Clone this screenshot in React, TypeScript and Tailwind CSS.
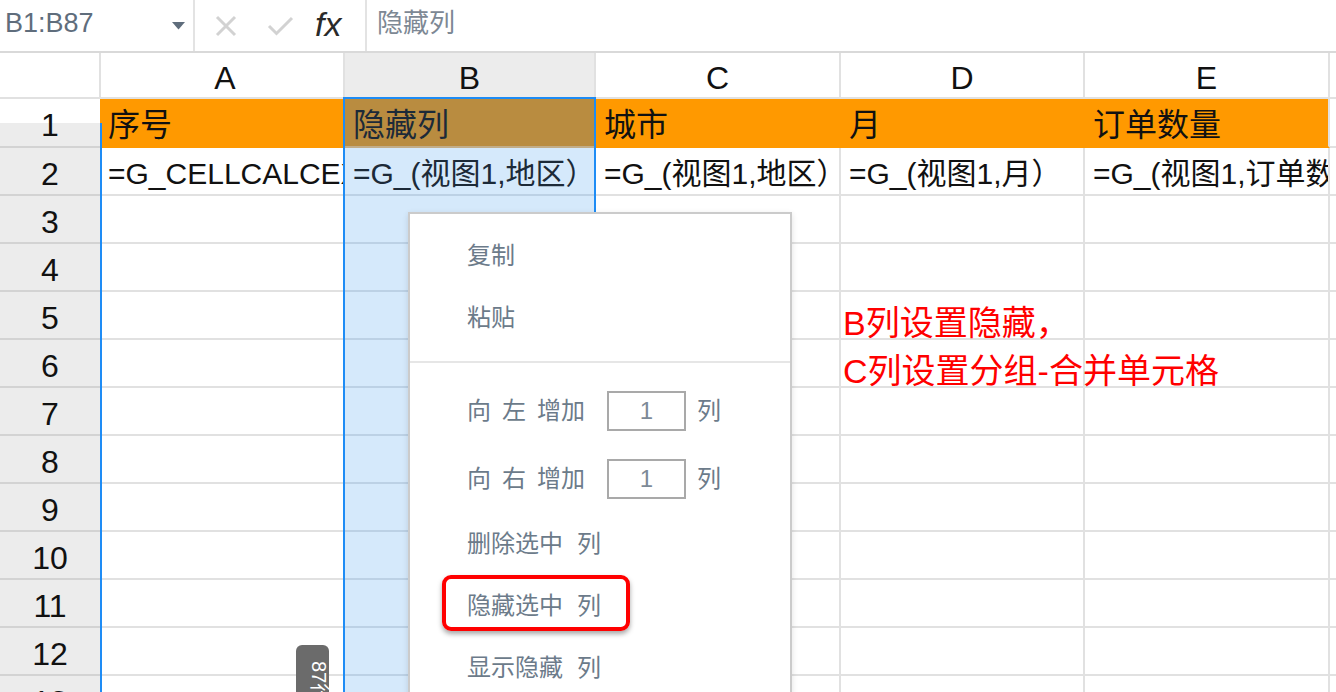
const colW = ['w-[245px]', 'w-[251px]', 'w-[245px]', 'w-[244px]', 'w-[245px]', 'flex-1'];

const row1Cls = [
  'bg-[#ff9900] border-[#ff9900] text-[#111]',
  'bg-[#b98c40] border-r-[#b98c40] border-b-[#c2ad88] text-[#1c2a38]',
  'bg-[#ff9900] border-[#ff9900] text-[#111]',
  'bg-[#ff9900] border-[#ff9900] text-[#111]',
  'bg-[#ff9900] border-b-[#ff9900] border-r-[#e1e1e1] text-[#111]',
  'bg-white border-[#e1e1e1]',
];

const plainCls = [
  'bg-white border-[#e1e1e1] text-[#111]',
  'bg-[#d5e9fb] border-r-[#d5e9fb] border-b-[#bcd1e5] text-[#1c2a38]',
  'bg-white border-[#e1e1e1] text-[#111]',
  'bg-white border-[#e1e1e1] text-[#111]',
  'bg-white border-[#e1e1e1] text-[#111]',
  'bg-white border-[#e1e1e1]',
];

const headerRow = ['序号', '隐藏列', '城市', '月', '订单数量', ''];
const formulaRow = [
  '=G_CELLCALCEXPR()',
  '=G_(视图1,地区）',
  '=G_(视图1,地区）',
  '=G_(视图1,月）',
  '=G_(视图1,订单数量）',
  '',
];

const TopBar = () => (
  <div className="flex h-[53px] border-b-2 border-[#d9d9d9] bg-white">
    <div className="flex w-[195px] items-center justify-between border-r-2 border-[#e3e3e3] pl-[5px] pr-[8px]">
      <span className="pb-[4px] text-[27px] leading-none text-[#5f6d7c]">B1:B87</span>
      <svg width="13" height="8" viewBox="0 0 13 8">
        <polygon points="0,0 13,0 6.5,7.5" fill="#5f6d7c" />
      </svg>
    </div>
    <div className="flex w-[172px] items-center border-r-2 border-[#e3e3e3]">
      <svg className="ml-[20px]" width="22" height="22" viewBox="0 0 22 22">
        <path d="M2 2 L20 20 M20 2 L2 20" stroke="#d2d2d2" strokeWidth="3" />
      </svg>
      <svg className="ml-[30px]" width="27" height="20" viewBox="0 0 27 20">
        <path d="M2 10 L9.5 17.5 L25 2" stroke="#d2d2d2" strokeWidth="3" fill="none" />
      </svg>
      <span className="ml-[21px] pb-[4px] text-[34px] italic leading-none text-[#2a2a2a]">fx</span>
    </div>
    <div className="flex flex-1 items-center pl-[10px]">
      <span className="pb-[6px] text-[26px] leading-none text-[#7d8894]">隐藏列</span>
    </div>
  </div>
);

const ColumnHeader = () => (
  <div className="flex h-[46px] border-b-2 border-[#e1e1e1] text-[32px] leading-none text-[#111]">
    <div className="w-[101px] border-r-2 border-[#e1e1e1] bg-white" />
    <div className="flex w-[244px] items-center justify-center border-r-2 border-[#e1e1e1] pt-[6px] pl-[6px]">A</div>
    <div className="flex w-[251px] items-center justify-center border-r-2 border-[#e1e1e1] bg-[#ececec] pt-[6px]">B</div>
    <div className="flex w-[245px] items-center justify-center border-r-2 border-[#e1e1e1] pt-[6px]">C</div>
    <div className="flex w-[244px] items-center justify-center border-r-2 border-[#e1e1e1] pt-[6px]">D</div>
    <div className="flex w-[245px] items-center justify-center border-r-2 border-[#e1e1e1] pt-[6px]">E</div>
    <div className="flex-1" />
  </div>
);

const SheetRow = ({ n }: { n: number }) => {
  const isFirst = n === 1;
  const cls = isFirst ? row1Cls : plainCls;
  const texts = isFirst ? headerRow : n === 2 ? formulaRow : ['', '', '', '', '', ''];
  const height = isFirst ? 'h-[49px]' : 'h-[48px]';
  const textSize = isFirst ? 'text-[32px]' : 'text-[30px]';

  return (
    <div className={`flex ${height}`}>
      <div
        className={`flex w-[100px] shrink-0 items-center justify-center border-b-2 border-[#d3d3d3] pt-[5px] text-[32px] leading-none text-[#111] ${
          isFirst ? 'bg-[linear-gradient(to_bottom,#ffffff_24px,#ececec_24px)]' : 'bg-[#ececec]'
        }`}
      >
        {n}
      </div>
      {colW.map((w, i) => {
        const isNote = i === 3 && (n === 5 || n === 6);
        return (
          <div
            key={i}
            className={`flex shrink-0 items-center border-r-2 border-b-2 ${w} ${cls[i]} ${
              isNote ? 'overflow-visible pl-[2px] pt-[16px]' : 'overflow-hidden pl-[8px] pt-[5px]'
            }`}
          >
            {isNote ? (
              <span className="relative z-10 whitespace-nowrap text-[34px] leading-none text-[#ff0000]">
                {n === 5 ? 'B列设置隐藏，' : 'C列设置分组-合并单元格'}
              </span>
            ) : (
              <span className={`whitespace-nowrap leading-none ${textSize}`}>{texts[i]}</span>
            )}
          </div>
        );
      })}
    </div>
  );
};

const ContextMenu = () => (
  <div className="absolute left-[408px] top-[212px] z-20 h-[520px] w-[384px] border-2 border-[#cbcbcb] bg-white text-[24px] leading-none text-[#6c7b8a] shadow-[0_2px_6px_rgba(0,0,0,0.12)]">
    <div className="pt-[11px]">
      <div className="flex h-[62px] items-center pl-[57px]">复制</div>
      <div className="flex h-[62px] items-center pl-[57px]">粘贴</div>
    </div>
    <div className="mt-[12px] h-[2px] bg-[#e6e6e6]" />
    <div className="pt-[14px]">
      {['左', '右'].map((side) => (
        <div key={side} className="flex h-[68px] items-center pl-[57px]">
          <span>向</span>
          <span className="ml-[11px]">{side}</span>
          <span className="ml-[11px]">增加</span>
          <div className="ml-[22px] flex h-[40px] w-[79px] items-center justify-center border-2 border-[#a9a9a9] text-[#7d8a97]">
            1
          </div>
          <span className="ml-[11px]">列</span>
        </div>
      ))}
      <div className="flex h-[62px] items-center pl-[57px]">
        删除选中<span className="ml-[14px]">列</span>
      </div>
      <div className="relative flex h-[62px] items-center pl-[57px]">
        <div className="absolute left-[32px] top-0 h-[56px] w-[188px] rounded-[9px] border-[4px] border-[#ff0000] shadow-[0_3px_5px_rgba(0,0,0,0.35)]" />
        隐藏选中<span className="ml-[14px]">列</span>
      </div>
      <div className="flex h-[62px] items-center pl-[57px]">
        显示隐藏<span className="ml-[14px]">列</span>
      </div>
    </div>
  </div>
);

const App = () => {
  const rows = Array.from({ length: 13 }, (_, i) => i + 1);

  return (
    <div className="relative h-[692px] w-[1336px] overflow-hidden bg-white font-['Liberation_Sans','Noto_Sans_CJK_SC',sans-serif]">
      <TopBar />
      <ColumnHeader />
      <div className="flex flex-col">
        {rows.map((n) => (
          <SheetRow key={n} n={n} />
        ))}
      </div>

      {/* selection outlines */}
      <div className="pointer-events-none absolute left-[100px] top-[123px] h-[600px] w-[2px] bg-[#1e8cf5]" />
      <div className="pointer-events-none absolute left-[343px] top-[97px] h-[640px] w-[253px] border-2 border-[#1e8cf5]" />

      {/* row count tag */}
      <div className="absolute left-[296px] top-[645px] z-10 flex h-[70px] w-[33px] items-start justify-center rounded-t-[6px] bg-[#6b6b6b] pt-[4px] text-[20px] leading-none text-white [writing-mode:vertical-rl] [text-orientation:sideways]">
        87行
      </div>

      <ContextMenu />
    </div>
  );
};

export default App;
